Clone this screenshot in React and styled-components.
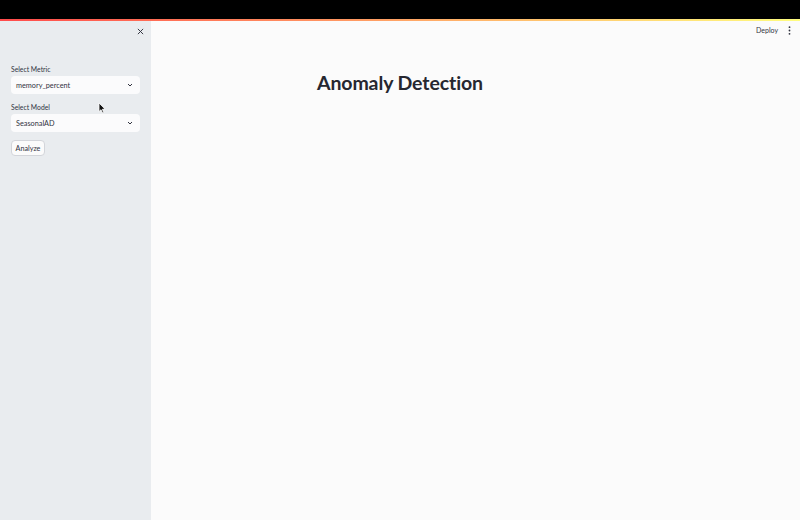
import React from 'react';
import styled, {createGlobalStyle} from 'styled-components';

const Global = createGlobalStyle`
  html, body {
    margin: 0;
    padding: 0;
    width: 800px;
    height: 520px;
    overflow: hidden;
    font-family: "Lato", "Liberation Sans", sans-serif;
  }
`;

const Page = styled.div`
  width: 800px;
  height: 520px;
  display: flex;
  flex-direction: column;
  background: #fbfbfb;
`
const TopBar = styled.div`
  height: 19px;
  background: #000;
  flex-shrink: 0;
`
const Decoration = styled.div`
  height: 2px;
  flex-shrink: 0;
  background: linear-gradient(90deg, #ff4b4b, #fffd80);
`
const Body = styled.div`
  flex: 1;
  display: flex;
`
const Sidebar = styled.div`
  position: relative;
  width: 151px;
  background: #e9ecef;
  padding: 7px 11px 0 11px;
  box-sizing: border-box;
  display: flex;
  flex-direction: column;
`
const CloseRow = styled.div`
  display: flex;
  justify-content: flex-end;
  margin-right: -4px;
  height: 7px;
  margin-bottom: 30px;
`
const Field = styled.div`
  display: flex;
  flex-direction: column;
  margin-bottom: 9px;
`
const Label = styled.div`
  font-size: 6.8px;
  color: #31333f;
  margin-bottom: 3px;
  line-height: 8px;
`
const Select = styled.div`
  height: 18px;
  width: 129px;
  background: #fbfbfc;
  border-radius: 4px;
  display: flex;
  align-items: center;
  justify-content: space-between;
  padding: 0 7px 0 5px;
  box-sizing: border-box;
  font-size: 7.3px;
  color: #31333f;
`
const Button = styled.div`
  margin-top: -1px;
  width: 34px;
  height: 16px;
  border: 1px solid #d3d5da;
  border-radius: 4px;
  background: #fbfbfb;
  box-sizing: border-box;
  display: flex;
  align-items: center;
  justify-content: center;
  font-size: 7.2px;
  color: #31333f;
`
const Cursor = styled.svg`
  position: absolute;
  left: 98px;
  top: 81px;
`
const Main = styled.div`
  flex: 1;
  display: flex;
  flex-direction: column;
`
const Header = styled.div`
  display: flex;
  justify-content: flex-end;
  align-items: center;
  gap: 10px;
  padding: 4px 9px 0 0;
  height: 10px;
`
const DeployLink = styled.span`
  font-size: 7px;
  color: #31333f;
`
const Content = styled.div`
  display: flex;
  justify-content: center;
  padding-right: 151px;
`
const Title = styled.h1`
  margin: 36px 0 0 0;
  font-size: 19.5px;
  font-weight: 700;
  color: #262730;
  letter-spacing: -0.1px;
`

function Chevron() {
    return (
        <svg width="6" height="4" viewBox="0 0 6 4">
            <path d="M1 1 L3 3 L5 1" fill="none" stroke="#31333f" strokeWidth="1"/>
        </svg>
    );
}

function App() {
    return (
        <>
            <Global/>
            <Page>
                <TopBar/>
                <Decoration/>
                <Body>
                    <Sidebar>
                        <CloseRow>
                            <svg width="7" height="7" viewBox="0 0 8 8">
                                <path d="M1 1 L7 7 M7 1 L1 7" stroke="#31333f" strokeWidth="1.1"/>
                            </svg>
                        </CloseRow>
                        <Field>
                            <Label>Select Metric</Label>
                            <Select>memory_percent<Chevron/></Select>
                        </Field>
                        <Field>
                            <Label>Select Model</Label>
                            <Select>SeasonalAD<Chevron/></Select>
                        </Field>
                        <Button>Analyze</Button>
                        <Cursor width="8" height="12" viewBox="0 0 8 12">
                            <path d="M1 1 L1 9.5 L3 7.8 L4.6 11 L5.8 10.4 L4.3 7.3 L7 7.1 Z" fill="#111" stroke="#fff" strokeWidth="0.8"/>
                        </Cursor>
                    </Sidebar>
                    <Main>
                        <Header>
                            <DeployLink>Deploy</DeployLink>
                            <svg width="3" height="9" viewBox="0 0 3 9">
                                <circle cx="1.5" cy="1.2" r="0.9" fill="#31333f"/>
                                <circle cx="1.5" cy="4.5" r="0.9" fill="#31333f"/>
                                <circle cx="1.5" cy="7.8" r="0.9" fill="#31333f"/>
                            </svg>
                        </Header>
                        <Content>
                            <Title>Anomaly Detection</Title>
                        </Content>
                    </Main>
                </Body>
            </Page>
        </>
    );
}

export default App;
